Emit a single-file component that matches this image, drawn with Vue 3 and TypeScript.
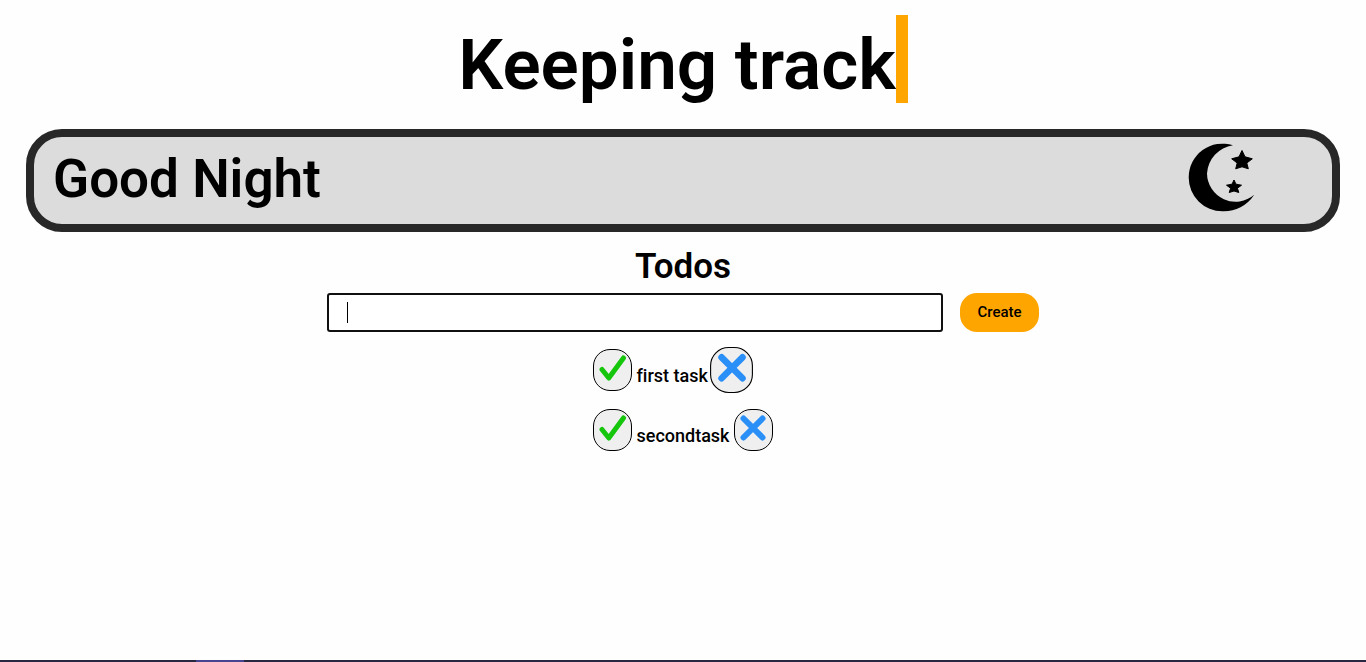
<script setup lang="ts">
import { ref } from 'vue'

interface Todo {
  id: number
  text: string
  active: boolean
}

const draft = ref('')
const focused = ref(true)
const todos = ref<Todo[]>([
  { id: 1, text: 'first task', active: true },
  { id: 2, text: 'secondtask', active: false },
])

function createTodo(): void {
  const text = draft.value.trim()
  if (!text) return
  todos.value.push({ id: Date.now(), text, active: false })
  draft.value = ''
}

function removeTodo(id: number): void {
  todos.value = todos.value.filter((todo) => todo.id !== id)
}
</script>

<template>
  <div class="page">
    <main class="content">
      <h1 class="title">Keeping track</h1>

      <section class="banner">
        <h2 class="greeting">Good Night</h2>
        <svg class="moon" viewBox="5 5 75 75" aria-hidden="true">
          <path
            d="M53 10.3A33.8 33.8 0 0 0 8.7 42.5A33.8 33.8 0 0 0 42.5 76.3A36 36 0 0 0 74.2 59.8A28.6 28.6 0 0 1 27 38.5A30 30 0 0 1 53 10.3Z"
          />
          <path
            class="star"
            d="M62 15.5L65 21.8L72.3 23.8L66.8 28L68.3 33.8L62 31.8L55.7 33.8L57.2 28L51.7 23.8L59 21.8Z"
          />
          <path
            class="star"
            d="M54 45L56 49.2L61.5 50.2L57.4 53.2L58.8 57.5L54 56L49.2 57.5L50.6 53.2L46.5 50.2L52 49.2Z"
          />
        </svg>
      </section>

      <h2 class="subtitle">Todos</h2>

      <form class="composer" @submit.prevent="createTodo">
        <div class="field">
          <input
            v-model="draft"
            class="entry"
            type="text"
            aria-label="New todo"
            @focus="focused = false"
          />
          <span v-if="focused" class="caret"></span>
        </div>
        <button class="create" type="submit">Create</button>
      </form>

      <ul class="list">
        <li v-for="todo in todos" :key="todo.id" class="item">
          <button class="action" type="button" aria-label="Complete">
            <svg class="glyph check" viewBox="0 0 28 28" aria-hidden="true">
              <path d="M3 15.5L9.8 24L24.5 4" />
            </svg>
          </button>
          <span class="label">{{ todo.text }}</span>
          <button
            class="action"
            :class="{ raised: todo.active }"
            type="button"
            aria-label="Delete"
            @click="removeTodo(todo.id)"
          >
            <svg class="glyph cross" viewBox="0 0 28 28" aria-hidden="true">
              <path d="M4.5 4.5L23.5 23.5M23.5 4.5L4.5 23.5" />
            </svg>
          </button>
        </li>
      </ul>
    </main>
    <footer class="strip"><span class="tab"></span></footer>
  </div>
</template>

<style>
body {
  margin: 0;
  background: #fefefe;
}
</style>

<style scoped>
.page {
  display: flex;
  flex-direction: column;
  min-height: 100vh;
  color: #000;
  font-family: Roboto, "Liberation Sans", sans-serif;
}

.content {
  display: flex;
  flex: 1;
  flex-direction: column;
  align-items: center;
  padding: 15px 26px 0;
}

.title {
  margin: 0 0 26px;
  border-right: 12px solid #ffa500;
  font-size: 71px;
  font-weight: 600;
  line-height: 88px;
  padding-top: 6px;
  height: 82px;
}

.banner {
  display: flex;
  align-items: flex-start;
  align-self: stretch;
  justify-content: space-between;
  padding: 0 72px 3px 19px;
  border: 8px solid #282828;
  border-radius: 36px;
  background: #dcdcdc;
}

.greeting {
  margin: 0;
  font-size: 53px;
  font-weight: 600;
  line-height: 84px;
}

.moon {
  width: 75px;
  height: 75px;
  margin-top: 3px;
}

.star {
  stroke: #000;
  stroke-width: 1;
  stroke-linejoin: round;
}

.subtitle {
  margin: 13px 0 4px;
  font-size: 35px;
  font-weight: 600;
  line-height: 44px;
}

.composer {
  display: flex;
  gap: 17px;
  justify-content: center;
  width: 100%;
}

.field {
  position: relative;
  width: 616px;
  max-width: 80%;
}

.entry {
  box-sizing: border-box;
  width: 100%;
  height: 39px;
  padding: 0 18px;
  border: 2px solid #101010;
  border-radius: 3px;
  outline: none;
  background: #fff;
  font: 500 18px Roboto, "Liberation Sans", sans-serif;
}

.caret {
  position: absolute;
  top: 9px;
  left: 20px;
  width: 1px;
  height: 21px;
  background: #000;
}

.create {
  height: 39px;
  padding: 0 17px 2px;
  border: 0;
  border-radius: 17px;
  background: #ffa500;
  color: #000;
  font: 500 15px Roboto, "Liberation Sans", sans-serif;
}

.list {
  display: flex;
  flex-direction: column;
  gap: 18px;
  margin: 17px 0 0;
  padding: 0;
  list-style: none;
}

.item {
  display: flex;
  align-items: center;
  gap: 4px;
}

.label {
  padding-top: 12px;
  font-size: 18px;
  font-variant-ligatures: none;
  font-weight: 500;
  line-height: 22px;
}

.action {
  box-sizing: border-box;
  display: flex;
  justify-content: center;
  width: 39px;
  height: 42px;
  padding: 4px 0 0;
  border: 1px solid #000;
  border-radius: 17px;
  background: #efefef;
}

.raised {
  transform: scale(1.1);
}

.glyph {
  width: 28px;
  height: 28px;
  fill: none;
  stroke-linecap: round;
  stroke-linejoin: round;
}

.check {
  stroke: #16c60c;
  stroke-width: 5;
}

.cross {
  stroke: #2a8ff7;
  stroke-width: 6;
}

.strip {
  display: flex;
  height: 2px;
  padding-left: 196px;
  background: #292841;
}

.tab {
  width: 48px;
  background: #464591;
}
</style>
